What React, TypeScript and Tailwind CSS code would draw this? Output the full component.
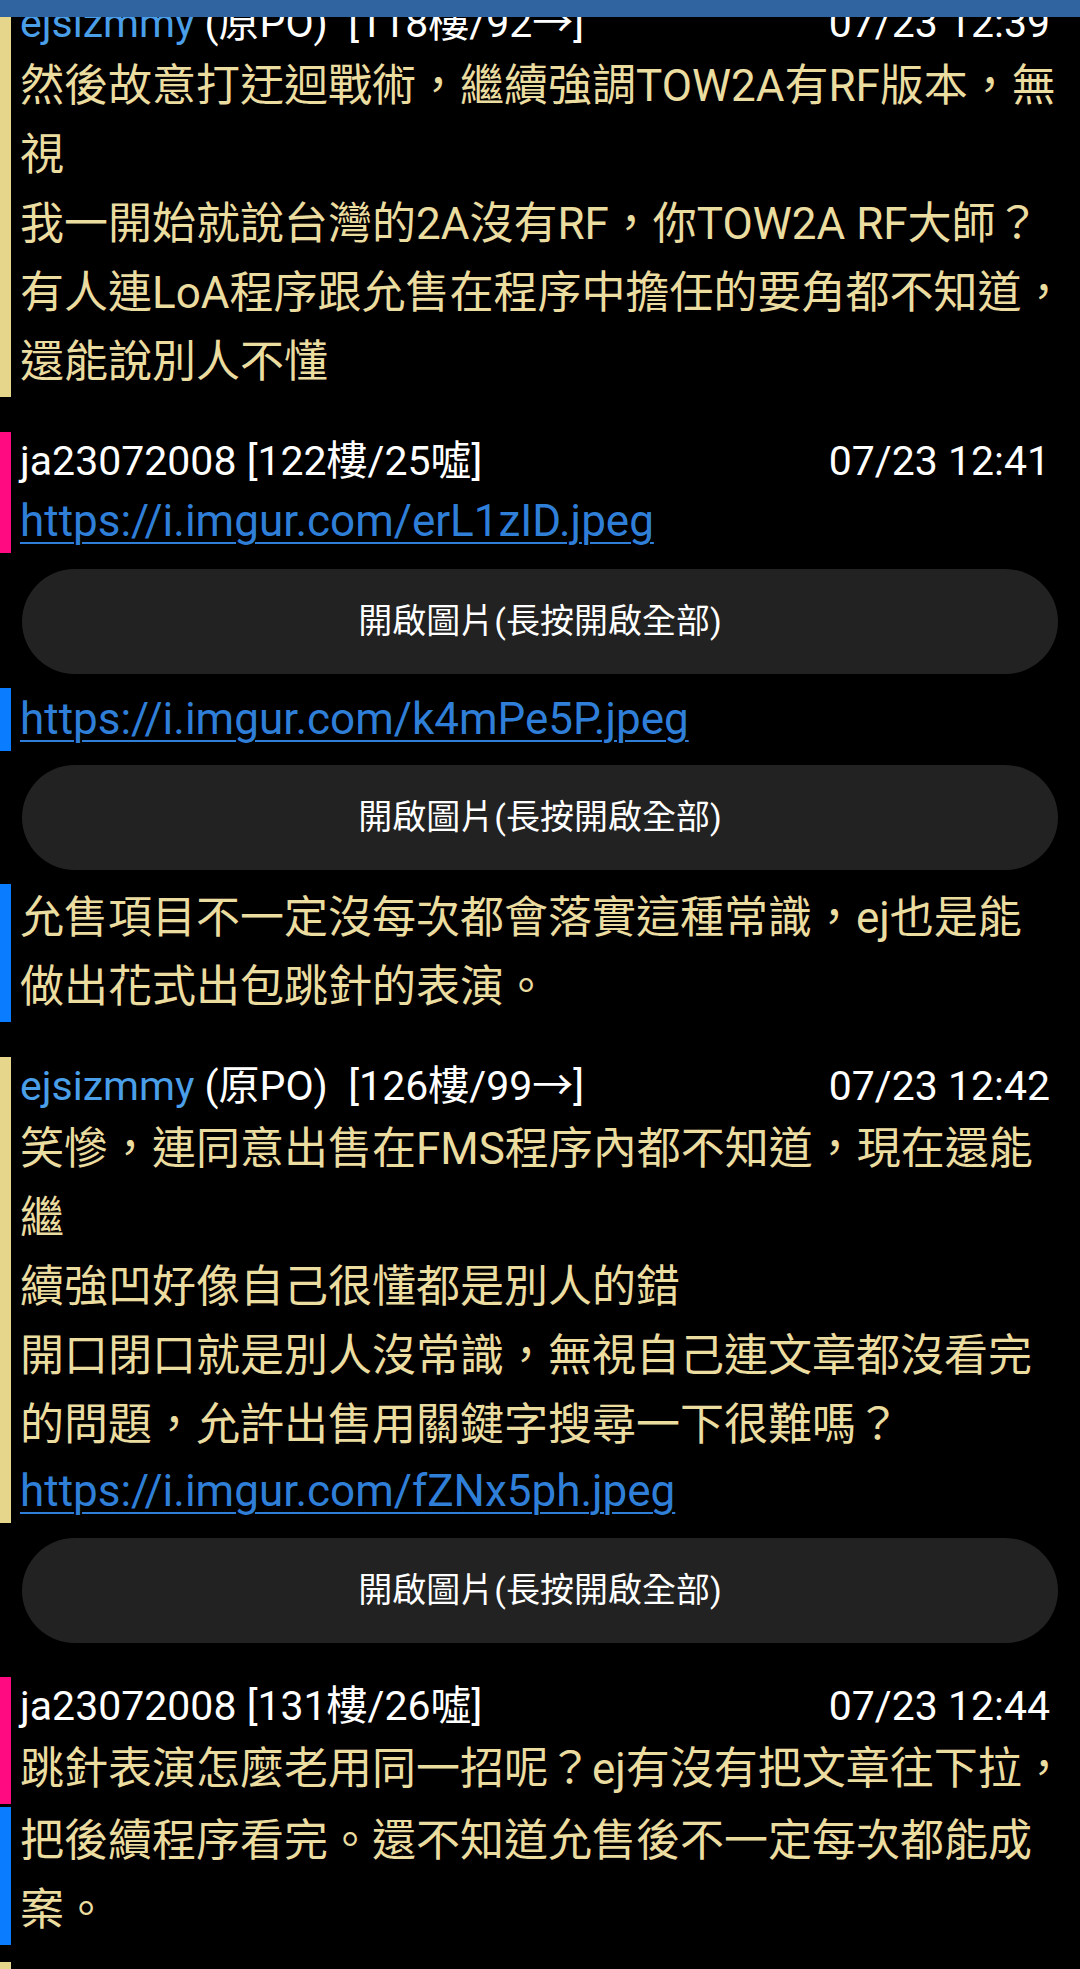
import React from 'react';

type Accent = 'yellow' | 'pink' | 'blue';

interface IHeader {
    user: string;
    isOp: boolean;
    floor: string;
    date: string;
}

interface IPost {
    accent: Accent;
    className: string;
    header?: IHeader;
    lines: string[];
    link?: string;
}

type Item = { kind: 'post'; post: IPost } | { kind: 'button'; className: string };

const ACCENT_BG: Record<Accent, string> = {
    yellow: 'bg-[#e6d68c]',
    pink: 'bg-[#ff0a80]',
    blue: 'bg-[#0a7cff]',
};

const FONT = "font-['Roboto','Noto_Sans_CJK_TC',sans-serif]";

const items: Item[] = [
    {
        kind: 'post',
        post: {
            accent: 'yellow',
            className: '-mt-[24px] pt-[18px] pb-[10px]',
            header: {
                user: 'ejsizmmy',
                isOp: true,
                floor: '[118樓/92→]',
                date: '07/23 12:39',
            },
            lines: [
                '然後故意打迂迴戰術，繼續強調TOW2A有RF版本，無',
                '視',
                '我一開始就說台灣的2A沒有RF，你TOW2A RF大師？',
                '有人連LoA程序跟允售在程序中擔任的要角都不知道，',
                '還能說別人不懂',
            ],
        },
    },
    {
        kind: 'post',
        post: {
            accent: 'pink',
            className: 'mt-[7px] pt-[18px] pb-[2px]',
            header: {
                user: 'ja23072008',
                isOp: false,
                floor: '[122樓/25噓]',
                date: '07/23 12:41',
            },
            lines: [],
            link: 'https://i.imgur.com/erL1zID.jpeg',
        },
    },
    { kind: 'button', className: 'mt-[14px]' },
    {
        kind: 'post',
        post: {
            accent: 'blue',
            className: 'mt-[14px] pb-[1px]',
            lines: [],
            link: 'https://i.imgur.com/k4mPe5P.jpeg',
        },
    },
    { kind: 'button', className: 'mt-[13px]' },
    {
        kind: 'post',
        post: {
            accent: 'blue',
            className: 'mt-[14px] pb-[10px]',
            lines: [
                '允售項目不一定沒每次都會落實這種常識，ej也是能',
                '做出花式出包跳針的表演。',
            ],
        },
    },
    {
        kind: 'post',
        post: {
            accent: 'yellow',
            className: 'mt-[7px] pt-[18px]',
            header: {
                user: 'ejsizmmy',
                isOp: true,
                floor: '[126樓/99→]',
                date: '07/23 12:42',
            },
            lines: [
                '笑慘，連同意出售在FMS程序內都不知道，現在還能',
                '繼',
                '續強凹好像自己很懂都是別人的錯',
                '開口閉口就是別人沒常識，無視自己連文章都沒看完',
                '的問題，允許出售用關鍵字搜尋一下很難嗎？',
            ],
            link: 'https://i.imgur.com/fZNx5ph.jpeg',
        },
    },
    { kind: 'button', className: 'mt-[15px]' },
    {
        kind: 'post',
        post: {
            accent: 'pink',
            className: 'mt-[16px] pt-[18px] pb-[3px]',
            header: {
                user: 'ja23072008',
                isOp: false,
                floor: '[131樓/26噓]',
                date: '07/23 12:44',
            },
            lines: ['跳針表演怎麼老用同一招呢？ej有沒有把文章往下拉，'],
        },
    },
    {
        kind: 'post',
        post: {
            accent: 'blue',
            className: 'pb-[12px]',
            lines: [
                '把後續程序看完。還不知道允售後不一定每次都能成',
                '案。',
            ],
        },
    },
    {
        kind: 'post',
        post: {
            accent: 'yellow',
            className: 'mt-[5px] h-[80px]',
            lines: [],
        },
    },
];

function PostHeader({ header }: { header: IHeader }) {
    return (
        <div className="flex justify-between items-center h-[58px] leading-[58px] text-[41px] text-white whitespace-pre">
            <div>
                {header.isOp ? (
                    <span>
                        <span className="text-[#4a9fe8]">{header.user}</span>
                        {' (原PO)  '}
                        {header.floor}
                    </span>
                ) : (
                    <span>
                        {header.user} {header.floor}
                    </span>
                )}
            </div>
            <div>{header.date}</div>
        </div>
    );
}

function Post({ post }: { post: IPost }) {
    return (
        <div className={`flex ${post.className}`}>
            <div className={`flex-none w-[11px] ${ACCENT_BG[post.accent]}`}></div>
            <div className="flex-1 min-w-0 pl-[9px] pr-[30px]">
                {post.header && <PostHeader header={post.header} />}
                {post.lines.map((line, i) => (
                    <div
                        key={i}
                        className="h-[69px] leading-[69px] text-[44px] text-[#ebdca0] whitespace-nowrap"
                    >
                        {line}
                    </div>
                ))}
                {post.link && (
                    <div className="h-[63px] leading-[63px] text-[44px] whitespace-nowrap">
                        <a
                            href="#"
                            className="text-[#2f7fd8] underline decoration-2 underline-offset-[6px]"
                        >
                            {post.link}
                        </a>
                    </div>
                )}
            </div>
        </div>
    );
}

function OpenImageButton({ className }: { className: string }) {
    return (
        <div className={`px-[22px] ${className}`}>
            <button className="w-full h-[105px] rounded-full bg-[#222222] text-white text-[34px]">
                開啟圖片(長按開啟全部)
            </button>
        </div>
    );
}

function App() {
    return (
        <div className={`relative min-h-[1969px] bg-black overflow-hidden ${FONT}`}>
            <div className="fixed top-0 left-0 right-0 h-[17px] bg-[#2f64a0] z-10"></div>
            <div className="flex flex-col">
                {items.map((item, i) =>
                    item.kind === 'post' ? (
                        <Post key={i} post={item.post} />
                    ) : (
                        <OpenImageButton key={i} className={item.className} />
                    )
                )}
            </div>
        </div>
    );
}

export default App;
